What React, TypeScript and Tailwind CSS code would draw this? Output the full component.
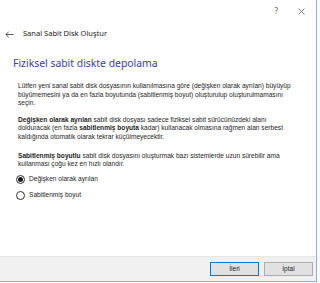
import React from 'react';

const body = "font-['Liberation_Sans',Arial,sans-serif] text-[6.6px] leading-[8.6px] text-[#1e1e1e]";

function Radio({ checked, label }: { checked?: boolean; label: string }) {
    return (
        <label className="flex items-center gap-[4px] h-[10px]">
            <span className="w-[9px] h-[9px] rounded-full border border-[#333] bg-white flex items-center justify-center">
                {checked && <span className="w-[5px] h-[5px] rounded-full bg-[#1a1a1a]" />}
            </span>
            <span className={body}>{label}</span>
        </label>
    );
}

export default function App() {
    return (
        <div className="w-[320px] h-[283px] bg-white">
            <div className="w-[317px] h-[282px] border-r border-b border-[#8faee0] flex flex-col">
                {/* title bar */}
                <div className="h-[22px] flex items-center justify-end pr-[10px] gap-[20px] text-[#555] font-['Noto_Sans',sans-serif]">
                    <span className="text-[8px]">?</span>
                    <svg width="7" height="7" viewBox="0 0 7 7" className="mr-[1px]">
                        <path d="M0.5 0.5 L6.5 6.5 M6.5 0.5 L0.5 6.5" stroke="#666" strokeWidth="0.8" />
                    </svg>
                </div>

                {/* header */}
                <div className="h-[24px] flex items-center pl-[5px] gap-[9px] font-['Noto_Sans',sans-serif] text-[7.5px] text-[#1a1a1a]">
                    <svg width="9" height="7" viewBox="0 0 9 7">
                        <path d="M8.5 3.5 H1 M3.8 0.6 L0.9 3.5 L3.8 6.4" stroke="#333" strokeWidth="0.8" fill="none" />
                    </svg>
                    <span>Sanal Sabit Disk Oluştur</span>
                </div>

                <div className="pl-[13px] pr-[10px] pt-[10px] flex-1">
                    <h1 className="font-['Noto_Sans',sans-serif] text-[10.4px] leading-[15px] text-[#3a3aa6]">
                        Fiziksel sabit diskte depolama
                    </h1>

                    <div className="pl-[5px] pr-[14px] mt-[11px] flex flex-col">
                        <p className={body}>
                            Lütfen yeni sanal sabit disk dosyasının kullanılmasına göre (değişken olarak ayrılan) büyüyüp büyümemesini ya da en fazla boyutunda (sabitlenmiş boyut) oluşturulup oluşturulmamasını seçin.
                        </p>
                        <p className={body + ' mt-[8px]'}>
                            <b>Değişken olarak ayrılan</b> sabit disk dosyası sadece fiziksel sabit sürücünüzdeki alanı dolduracak (en fazla <b>sabitlenmiş boyuta</b> kadar) kullanacak olmasına rağmen alan serbest kaldığında otomatik olarak tekrar küçülmeyecektir.
                        </p>
                        <p className={body + ' mt-[10px]'}>
                            <b>Sabitlenmiş boyutlu</b> sabit disk dosyasını oluşturmak bazı sistemlerde uzun sürebilir ama kullanması çoğu kez en hızlı olandır.
                        </p>
                        <div className="-ml-[2px] mt-[6px] flex flex-col gap-[6px]">
                            <Radio checked label="Değişken olarak ayrılan" />
                            <Radio label="Sabitlenmiş boyut" />
                        </div>
                    </div>
                </div>

                {/* footer */}
                <div className="h-[25px] bg-[#f0f0f0] border-t border-[#e6e6e6] flex items-center justify-end gap-[5px] pr-[3px]">
                    <button className="w-[49px] h-[14px] bg-[#e1e1e1] border border-[#0078d7] font-['Liberation_Sans',sans-serif] text-[6.6px] text-[#1e1e1e]">
                        İleri
                    </button>
                    <button className="w-[49px] h-[14px] bg-[#e1e1e1] border border-[#adadad] font-['Liberation_Sans',sans-serif] text-[6.6px] text-[#1e1e1e]">
                        İptal
                    </button>
                </div>
            </div>
        </div>
    );
}
